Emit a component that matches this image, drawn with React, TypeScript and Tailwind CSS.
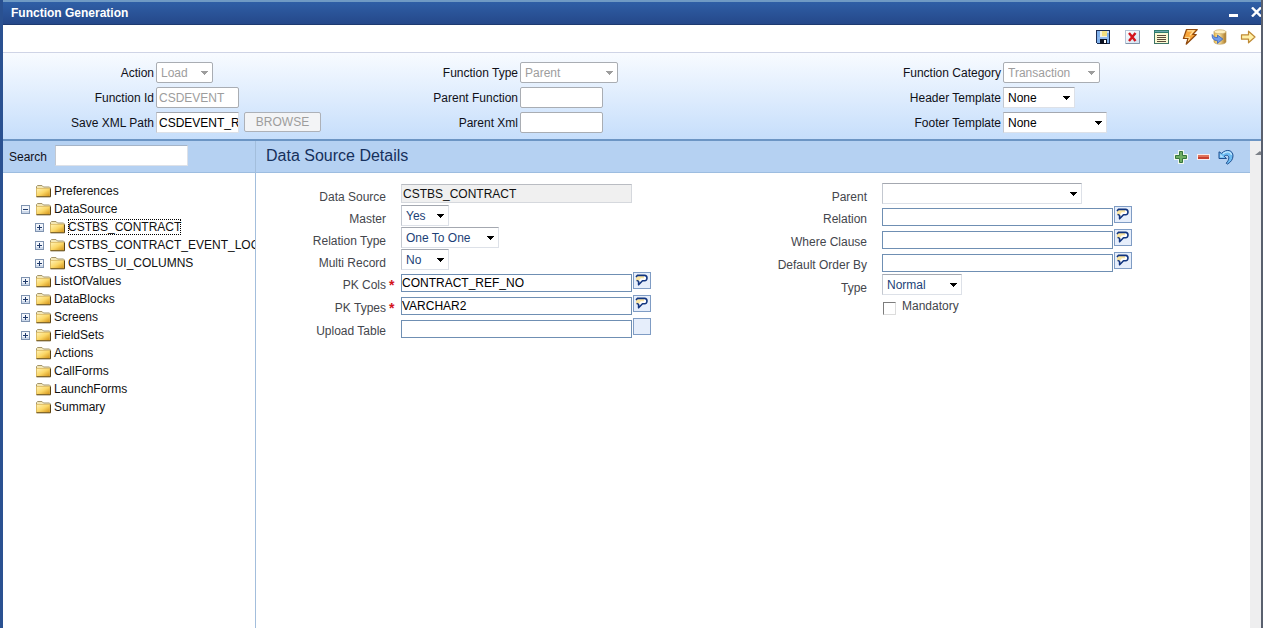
import { useState, type ReactNode } from 'react';

/* ---------- icons ---------- */

const SaveIcon = () => (
  <svg width="16" height="16" viewBox="0 0 16 16" shapeRendering="crispEdges" aria-hidden="true">
    <path d="M1 1h14v14H2l-1-1z" fill="#1b2c52" />
    <path d="M2 2h3v12H2zM12 4h2v10h-2z" fill="#7fb0ea" />
    <path d="M12 2h2v2h-2z" fill="#c9dbf5" />
    <path d="M5 2h7v6H5z" fill="#f4f1dc" />
    <path d="M7 2h5v5H7z" fill="#f3df80" />
    <path d="M3 8h11v2H3z" fill="#8fb8ee" />
    <path d="M5 10h7v5H5z" fill="#0c1120" />
    <path d="M9 11h2v3H9z" fill="#ffffff" />
  </svg>
);

const CloseDocIcon = () => (
  <svg width="16" height="16" viewBox="0 0 16 16" aria-hidden="true">
    <defs>
      <linearGradient id="xbox" x1="0" y1="0" x2="1" y2="1">
        <stop offset="0" stopColor="#ffffff" />
        <stop offset="1" stopColor="#cfe0f0" />
      </linearGradient>
    </defs>
    <rect x="1.5" y="1.5" width="14" height="13" fill="url(#xbox)" stroke="#b4c4d6" />
    <path d="M15.500 2v12.500H2" fill="none" stroke="#8295aa" />
    <path d="M5 4l6.500 8M11.500 4L5 12" stroke="#d3131c" strokeWidth="2.4" />
  </svg>
);

const ListIcon = () => (
  <svg width="16" height="16" viewBox="0 0 16 16" shapeRendering="crispEdges" aria-hidden="true">
    <path d="M1 1h15v14H1z" fill="#3e7466" />
    <path d="M2 4h13v10H2z" fill="#fbf9d2" />
    <path d="M1 1h15v3H1z" fill="#2f7d6d" />
    <path d="M2 2h13v1H2z" fill="#6aa5ae" />
    <path d="M4 6h9v1H4zM4 8h9v1H4zM4 10h9v1H4zM4 12h9v1H4z" fill="#5b4a3a" />
  </svg>
);

const BoltIcon = () => (
  <svg width="16" height="18" viewBox="0 0 16 18" aria-hidden="true">
    <path
      d="M4.500 1.500h10.800l-4.600 5h3.600L4.200 16.200l1.800-5.700H1.400z"
      fill="#f9a63a"
      stroke="#8f4a10"
      strokeWidth="1.200"
      strokeLinejoin="round"
    />
    <path d="M5.400 2.800h6.400L7.800 7.400" fill="none" stroke="#ffe3a0" strokeWidth="1.200" />
    <path d="M3.200 9.400h4.600l-1.400 3.400" fill="none" stroke="#ffdf98" strokeWidth="1" />
  </svg>
);

const DatabaseIcon = () => (
  <svg width="16" height="18" viewBox="0 0 16 18" aria-hidden="true">
    <defs>
      <linearGradient id="cyl" x1="0" x2="1">
        <stop offset="0" stopColor="#e8b748" />
        <stop offset="0.4" stopColor="#ffe9a3" />
        <stop offset="1" stopColor="#a87424" />
      </linearGradient>
    </defs>
    <path d="M3 3.800v10c0 3.200 12 3.200 12 0v-10z" fill="url(#cyl)" stroke="#c0a060" strokeWidth="0.7" />
    <ellipse cx="9" cy="3.800" rx="6" ry="2" fill="#fff0c0" stroke="#c6a765" strokeWidth="0.7" />
    <path
      d="M1.200 6.500c-.4 4 1.500 6 5.300 6.200v2.800l5.300-4.500-5.300-4v2.600C4 9.800 2.500 8.800 1.200 6.500z"
      fill="#6f9be8"
      stroke="#3a62b8"
      strokeWidth="0.8"
    />
  </svg>
);

const ArrowIcon = () => (
  <svg width="16" height="16" viewBox="0 0 16 16" aria-hidden="true">
    <path
      d="M1.500 5.800H8.500V2.200L15 8l-6.500 5.800v-3.600H1.500z"
      fill="#fff0a8"
      stroke="#bf8a34"
      strokeWidth="1.200"
      strokeLinejoin="round"
    />
  </svg>
);

const PlusIcon = () => (
  <svg width="14" height="14" viewBox="0 0 14 14" aria-hidden="true">
    <path d="M4 0h6v4h4v6h-4v4H4v-4H0V4h4z" fill="#eef7ee" />
    <path d="M5.500 1.500h3v4h4v3h-4v4h-3v-4h-4v-3h4z" fill="#6fae62" stroke="#35753c" strokeWidth="1" />
  </svg>
);

const MinusIcon = () => (
  <svg width="14" height="14" viewBox="0 0 14 14" aria-hidden="true">
    <rect x="1" y="4" width="13" height="6" fill="#f7eef0" />
    <rect x="2" y="5" width="11" height="4" fill="#c9402f" />
    <rect x="2" y="5" width="11" height="2" fill="#e0745c" />
  </svg>
);

const UndoIcon = () => (
  <svg width="16" height="16" viewBox="0 0 16 16" aria-hidden="true">
    <path
      d="M1 2.800V9.500h7.500L6.200 7.300C8 5.600 10.800 6 10.800 8.800c0 2-1 3.400-2.600 5.400l1.300.9c3.400-2 5.500-4.700 5.500-8.300C15 1.200 8.500-.6 3.600 4.400z"
      fill="#6fbdf3"
      stroke="#1f4f90"
      strokeWidth="1"
      strokeLinejoin="round"
    />
    <path d="M5 4.700C8.300 1.700 12.800 2.300 13.500 6" fill="none" stroke="#c4e8ff" strokeWidth="1.300" />
    <path d="M2.200 5v3.300h3.500z" fill="#b5e0fc" />
  </svg>
);

const FolderIcon = () => (
  <svg width="16" height="14" viewBox="0 0 16 14" className="shrink-0" aria-hidden="true">
    <defs>
      <linearGradient id="folder" x1="0" y1="0" x2="1" y2="1">
        <stop offset="0" stopColor="#fff3b8" />
        <stop offset="0.5" stopColor="#fbd766" />
        <stop offset="1" stopColor="#d18f14" />
      </linearGradient>
    </defs>
    <path d="M.5 12.500V2.500l1-1h4.500l1.500 1.500h6l.5.5v2" fill="#f3e6b4" stroke="#a3946a" />
    <path d="M.5 12.500v-8h13.500v8z" fill="url(#folder)" stroke="#dcb95e" strokeWidth="0.800" />
    <path d="M.5 12.800h14V4.500" fill="none" stroke="#5c4312" />
  </svg>
);

const Expander = ({ open }: { open: boolean }) => (
  <svg width="9" height="9" viewBox="0 0 9 9" shapeRendering="crispEdges" aria-hidden="true">
    <rect width="9" height="9" fill="#7f93b0" />
    <rect x="1" y="1" width="7" height="7" fill="#f3f6fb" />
    <path d="M1 6h7v2H1z" fill="#cdd9ea" />
    <path d="M2 4h5v1H2z" fill="#1f3a6b" />
    {!open && <path d="M4 2h1v5H4z" fill="#1f3a6b" />}
  </svg>
);

const LookupIcon = () => (
  <svg width="16" height="15" viewBox="0 0 16 15" className="shrink-0" aria-hidden="true">
    <path
      d="M2 3.500L3 2.500h7.500c3.200 0 3.200 5.200 0 5.200H8.500L4.500 12V8H3.200"
      fill="#ffffff"
    />
    <path d="M2 3h8v2.200H6.800L4.800 8H2z" fill="#fbe6a4" />
    <path
      d="M2 4L3.300 2.400h7.200c3.300 0 3.300 5.400 0 5.400H8.500L4.600 11.800V8.400L2.600 7.400"
      fill="none"
      stroke="#12357f"
      strokeWidth="1.600"
      strokeLinejoin="round"
    />
  </svg>
);

/* ---------- controls ---------- */

type SelectProps = {
  id: string;
  value: string;
  width: string;
  disabled?: boolean;
  tone?: string;
};

const Select = ({ id, value, width, disabled, tone = 'text-black' }: SelectProps) => (
  <span className={`relative block h-[21px] ${width}`}>
    <select
      id={id}
      disabled={disabled}
      defaultValue={value}
      className={`block h-full w-full appearance-none border bg-white pl-1 leading-4 opacity-100 ${
        disabled
          ? 'rounded-xs border-[#a9adb3] text-[#9d9d9d]'
          : `border-t-[#a4a8b0] border-r-[#dde1e8] border-b-[#dde1e8] border-l-[#c3c8d0] ${tone}`
      }`}
    >
      <option>{value}</option>
    </select>
    <svg
      width="7"
      height="4"
      viewBox="0 0 7 4"
      shapeRendering="crispEdges"
      aria-hidden="true"
      className={`pointer-events-none absolute top-[9px] right-[5px] ${disabled ? 'text-[#9d9d9d]' : 'text-black'}`}
    >
      <path d="M0 0h7v1H6v1H5v1H4v1H3V3H2V2H1V1H0z" fill="currentColor" />
    </svg>
  </span>
);

const HeaderRow = ({ id, label, children }: { id: string; label: string; children: ReactNode }) => (
  <div className="flex h-[21px] gap-0.5">
    <label htmlFor={id} className="w-[151px] shrink-0 pt-[3px] text-right leading-4 text-[#101018]">
      {label}
    </label>
    {children}
  </div>
);

const headerInput =
  'h-[21px] w-[83px] rounded-xs border border-[#a9adb3] bg-white px-0.5 leading-4 text-black disabled:text-[#9d9d9d]';

type FieldProps = {
  id: string;
  label: string;
  tall?: boolean;
  required?: boolean;
  children: ReactNode;
};

const Field = ({ id, label, tall, required, children }: FieldProps) => (
  <div className={`flex ${tall ? 'h-[23px]' : 'h-[22px]'}`}>
    <label htmlFor={id} className="w-[130px] shrink-0 pt-1.5 text-right leading-4 text-[#44464c]">
      {label}
    </label>
    <span className="w-[15px] shrink-0 pt-1.5 pl-[3px] text-sm leading-4 font-bold text-[#d3131c]">
      {required && '*'}
    </span>
    {children}
  </div>
);

const LookupField = ({
  id,
  value = '',
  label,
  icon = true,
}: {
  id: string;
  value?: string;
  label: string;
  icon?: boolean;
}) => (
  <span className="flex items-start gap-px">
    <input
      id={id}
      defaultValue={value}
      className="mt-[3px] h-[18px] w-[231px] border border-[#6f8fb3] bg-white leading-4 text-black"
    />
    <button
      type="button"
      aria-label={`${label} lookup`}
      className="mt-px flex h-[17px] w-[18px] items-center justify-center border border-[#7f9cc4] bg-[#e6eefb]"
    >
      {icon && <LookupIcon />}
    </button>
  </span>
);

/* ---------- tree ---------- */

type Node = { name: string; children?: Node[]; open?: boolean; selected?: boolean };

const tree: Node[] = [
  { name: 'Preferences' },
  {
    name: 'DataSource',
    open: true,
    children: [
      { name: 'CSTBS_CONTRACT', selected: true, children: [] },
      { name: 'CSTBS_CONTRACT_EVENT_LOG', children: [] },
      { name: 'CSTBS_UI_COLUMNS', children: [] },
    ],
  },
  { name: 'ListOfValues', children: [] },
  { name: 'DataBlocks', children: [] },
  { name: 'Screens', children: [] },
  { name: 'FieldSets', children: [] },
  { name: 'Actions' },
  { name: 'CallForms' },
  { name: 'LaunchForms' },
  { name: 'Summary' },
];

const TreeItem = ({ node }: { node: Node }) => {
  const [open, setOpen] = useState(!!node.open);
  return (
    <li>
      <div className="flex h-[18px] items-center">
        <span className="flex w-[15px] shrink-0">
          {node.children && (
            <button type="button" aria-label={`Toggle ${node.name}`} onClick={() => setOpen(!open)}>
              <Expander open={open} />
            </button>
          )}
        </span>
        <FolderIcon />
        <a
          href="#"
          className={`ml-0.5 leading-4 whitespace-nowrap text-[#101010] ${
            node.selected ? 'outline-1 -outline-offset-1 outline-dotted outline-black' : ''
          }`}
        >
          {node.name}
        </a>
      </div>
      {open && node.children && node.children.length > 0 && (
        <ul className="pl-3.5">
          {node.children.map((child) => (
            <TreeItem key={child.name} node={child} />
          ))}
        </ul>
      )}
    </li>
  );
};

/* ---------- page ---------- */

const tools = [
  { name: 'Save', icon: <SaveIcon /> },
  { name: 'Close', icon: <CloseDocIcon /> },
  { name: 'List', icon: <ListIcon /> },
  { name: 'Generate', icon: <BoltIcon /> },
  { name: 'Deploy', icon: <DatabaseIcon /> },
  { name: 'Exit', icon: <ArrowIcon /> },
];

export default function App() {
  return (
    <div className="flex min-h-screen flex-col border-r-2 border-l-3 border-r-[#59606e] border-l-[#2a5191] bg-white font-['Liberation_Sans',Arial,sans-serif] text-xs">
      <header className="flex h-[25px] items-center justify-between border-t-2 border-b border-t-[#6f9ac4] border-b-[#1d3a70] bg-linear-to-b from-[#2f5fa6] to-[#25488a] pl-2">
        <h1 className="font-bold text-white">Function Generation</h1>
        <div className="flex items-center gap-3 pb-0.5">
          <button type="button" aria-label="Minimize">
            <svg width="10" height="10" viewBox="0 0 10 10" aria-hidden="true">
              <path d="M0 7h9v3H0z" fill="#fff" />
            </svg>
          </button>
          <button type="button" aria-label="Close window">
            <svg width="10" height="10" viewBox="0 0 10 10" aria-hidden="true">
              <path d="M1 .5l9 9M10 .5L1 9.500" stroke="#fff" strokeWidth="2.400" />
            </svg>
          </button>
        </div>
      </header>

      <div className="flex h-7 items-center justify-end gap-[13px] border-b border-[#cfd4e6] pr-[5px] pb-[3px]">
        {tools.map((t) => (
          <button key={t.name} type="button" aria-label={t.name} className="w-4">
            {t.icon}
          </button>
        ))}
      </div>

      <form className="grid grid-cols-[364fr_483fr_411fr] border-b-2 border-[#6c95c4] bg-linear-to-b from-[#f8fbff] to-[#c6defb] pt-[9px] pb-1.5">
        <div className="flex flex-col gap-1">
          <HeaderRow id="action" label="Action">
            <Select id="action" value="Load" width="w-[57px]" disabled />
          </HeaderRow>
          <HeaderRow id="functionId" label="Function Id">
            <input id="functionId" disabled defaultValue="CSDEVENT" className={headerInput} />
          </HeaderRow>
          <HeaderRow id="savePath" label="Save XML Path">
            <input
              id="savePath"
              defaultValue="CSDEVENT_RAD.xml"
              className="h-[21px] w-[83px] border border-t-[#a4a8b0] border-r-[#dde1e8] border-b-[#dde1e8] border-l-[#c3c8d0] bg-white pl-0.5 leading-4 text-black"
            />
            <button
              type="button"
              disabled
              className="ml-[3px] h-5 w-[77px] rounded-xs border border-[#adb1b8] bg-[#f3f4f6] leading-4 text-[#9d9d9d]"
            >
              BROWSE
            </button>
          </HeaderRow>
        </div>
        <div className="flex flex-col gap-1">
          <HeaderRow id="functionType" label="Function Type">
            <Select id="functionType" value="Parent" width="w-[98px]" disabled />
          </HeaderRow>
          <HeaderRow id="parentFunction" label="Parent Function">
            <input id="parentFunction" className={headerInput} />
          </HeaderRow>
          <HeaderRow id="parentXml" label="Parent Xml">
            <input id="parentXml" className={headerInput} />
          </HeaderRow>
        </div>
        <div className="flex flex-col gap-1">
          <HeaderRow id="functionCategory" label="Function Category">
            <Select id="functionCategory" value="Transaction" width="w-[97px]" disabled />
          </HeaderRow>
          <HeaderRow id="headerTemplate" label="Header Template">
            <Select id="headerTemplate" value="None" width="w-[72px]" />
          </HeaderRow>
          <HeaderRow id="footerTemplate" label="Footer Template">
            <Select id="footerTemplate" value="None" width="w-[104px]" />
          </HeaderRow>
        </div>
      </form>

      <div className="flex flex-1">
        <aside className="w-[253px] shrink-0 overflow-hidden border-r border-[#a3bedc]">
          <div className="flex h-8 items-center gap-2 border-b border-[#9dbde0] bg-[#b5d1f2] pb-0.5 pl-1.5">
            <label htmlFor="search" className="pt-0.5 leading-4 text-[#101018]">
              Search
            </label>
            <input
              id="search"
              className="h-[21px] w-[133px] border border-t-[#a4b4c8] border-r-[#dde1e8] border-b-[#dde1e8] border-l-[#c3c8d0] bg-white px-0.5 leading-4"
            />
          </div>
          <ul className="pt-[9px] pl-[18px]">
            {tree.map((node) => (
              <TreeItem key={node.name} node={node} />
            ))}
          </ul>
        </aside>

        <main className="min-w-0 flex-1">
          <div className="flex h-8 items-center justify-between border-b border-[#9dbde0] bg-[#b5d1f2] pr-4 pl-2.5">
            <h2 className="pb-0.5 text-base leading-5 text-[#16305c]">Data Source Details</h2>
            <div className="flex items-center gap-2">
              <button type="button" aria-label="Add">
                <PlusIcon />
              </button>
              <button type="button" aria-label="Remove">
                <MinusIcon />
              </button>
              <button type="button" aria-label="Undo">
                <UndoIcon />
              </button>
            </div>
          </div>

          <form className="grid grid-cols-[481fr_513fr] pt-2.5">
            <div>
              <Field id="dataSource" label="Data Source">
                <input
                  id="dataSource"
                  readOnly
                  defaultValue="CSTBS_CONTRACT"
                  className="mt-px h-[19px] w-[231px] border border-t-[#b9bcc2] border-r-[#d5d8dd] border-b-[#d5d8dd] border-l-[#d5d8dd] bg-[#f0f0f0] px-px leading-4 text-[#101010]"
                />
              </Field>
              <Field id="master" label="Master">
                <Select id="master" value="Yes" width="w-[48px]" tone="text-[#1c3f77]" />
              </Field>
              <Field id="relationType" label="Relation Type">
                <Select id="relationType" value="One To One" width="w-[98px]" tone="text-[#1c3f77]" />
              </Field>
              <Field id="multiRecord" label="Multi Record">
                <Select id="multiRecord" value="No" width="w-[48px]" tone="text-[#1c3f77]" />
              </Field>
              <Field id="pkCols" label="PK Cols" tall required>
                <LookupField id="pkCols" label="PK Cols" value="CONTRACT_REF_NO" />
              </Field>
              <Field id="pkTypes" label="PK Types" tall required>
                <LookupField id="pkTypes" label="PK Types" value="VARCHAR2" />
              </Field>
              <Field id="uploadTable" label="Upload Table" tall>
                <LookupField id="uploadTable" label="Upload Table" icon={false} />
              </Field>
            </div>

            <div>
              <Field id="parent" label="Parent">
                <Select id="parent" value="" width="w-[200px]" tone="text-[#1c3f77]" />
              </Field>
              <Field id="relation" label="Relation" tall>
                <LookupField id="relation" label="Relation" />
              </Field>
              <Field id="whereClause" label="Where Clause" tall>
                <LookupField id="whereClause" label="Where Clause" />
              </Field>
              <Field id="orderBy" label="Default Order By" tall>
                <LookupField id="orderBy" label="Default Order By" />
              </Field>
              <Field id="type" label="Type">
                <Select id="type" value="Normal" width="w-[80px]" tone="text-[#1c3f77]" />
              </Field>
              <div className="flex items-start gap-1.5 pt-0.5 pl-[146px]">
                <input
                  id="mandatory"
                  type="checkbox"
                  className="mt-1 size-[13px] appearance-none border border-t-[#7d7d7d] border-r-[#dcdcdc] border-b-[#dcdcdc] border-l-[#7d7d7d] bg-white checked:bg-[#1c3f77]"
                />
                <label htmlFor="mandatory" className="leading-4 text-[#44464c]">
                  Mandatory
                </label>
              </div>
            </div>
          </form>
        </main>

        <div className="flex w-[11px] shrink-0 justify-end bg-[#eeeeef] pt-2.5">
          <svg width="6" height="4" viewBox="0 0 6 4" aria-hidden="true">
            <path d="M0 4L5 0l1 1v3z" fill="#7c8088" />
          </svg>
        </div>
      </div>
    </div>
  );
}
